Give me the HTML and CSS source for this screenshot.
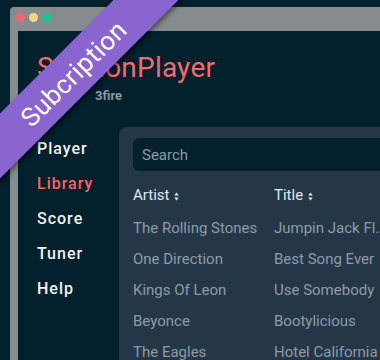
FILE: index.html
```html
<!DOCTYPE html>
<html lang="en">
<head>
  <meta charset="UTF-8">
  <meta name="viewport" content="width=device-width, initial-scale=1">
  <title>SessionPlayer</title>
  <link rel="stylesheet" href="styles.css">
</head>
<body>
  <div class="ribbon">Subcription</div>
  <div class="window">
    <div class="titlebar">
      <span class="dot red"></span>
      <span class="dot yellow"></span>
      <span class="dot green"></span>
    </div>
    <div class="app">
      <header class="brand">
        <h1>SessionPlayer</h1>
        <p class="by">3fire</p>
      </header>
      <div class="main">
        <nav class="nav">
          <a href="#">Player</a>
          <a href="#" class="active">Library</a>
          <a href="#">Score</a>
          <a href="#">Tuner</a>
          <a href="#">Help</a>
        </nav>
        <section class="panel">
          <input class="search" type="text" placeholder="Search">
          <table class="songs">
            <thead>
              <tr>
                <th class="col-artist">Artist <svg class="sort" width="5" height="9" viewBox="0 0 5 9"><path d="M2.5 0.5 L4.8 3.4 H0.2 Z M2.5 8.5 L4.8 5.6 H0.2 Z" fill="currentColor"/></svg></th>
                <th class="col-title">Title <svg class="sort" width="5" height="9" viewBox="0 0 5 9"><path d="M2.5 0.5 L4.8 3.4 H0.2 Z M2.5 8.5 L4.8 5.6 H0.2 Z" fill="currentColor"/></svg></th>
              </tr>
            </thead>
            <tbody>
              <tr><td>The Rolling Stones</td><td><span class="cut">Jumpin Jack Flash</span></td></tr>
              <tr><td>One Direction</td><td>Best Song Ever</td></tr>
              <tr><td>Kings Of Leon</td><td>Use Somebody</td></tr>
              <tr><td>Beyonce</td><td>Bootylicious</td></tr>
              <tr><td>The Eagles</td><td>Hotel California</td></tr>
            </tbody>
          </table>
        </section>
      </div>
    </div>
  </div>
</body>
</html>
```

FILE: styles.css
```css
* { margin: 0; padding: 0; box-sizing: border-box; }
body {
  font-family: Roboto, 'Noto Sans', sans-serif;
  background: #03202d;
  color: #fff;
  width: 380px;
  height: 360px;
  overflow: hidden;
  position: relative;
}
.window {
  margin: 7px 0 0 10px;
  width: 420px;
  background: #868c8e;
  border-radius: 4px 0 0 0;
  padding-left: 8px;
}
.titlebar {
  height: 24px;
  margin-left: -8px;
  padding: 6px 0 0 6px;
  display: flex;
  gap: 4px;
}
.dot {
  width: 9px;
  height: 9px;
  border-radius: 50%;
}
.red { background: #f2666a; }
.yellow { background: #f7d68b; }
.green { background: #19c596; }
.app {
  background: #03202d;
  height: 330px;
}
.brand {
  padding: 20px 0 0 19px;
  height: 96px;
}
h1 {
  font-weight: 400;
  font-size: 28px;
  line-height: 34px;
  color: #f56a6a;
  letter-spacing: 0.2px;
}
.by {
  font-size: 13px;
  font-weight: 700;
  color: #8a989f;
  margin: 3px 0 0 58px;
}
.main {
  display: flex;
}
.nav {
  flex: none;
  width: 101px;
  padding: 12px 0 0 19px;
  display: flex;
  flex-direction: column;
  gap: 16px;
}
.nav a {
  color: #f2f2f2;
  text-decoration: none;
  font-size: 16px;
  font-weight: 500;
  letter-spacing: 1px;
  line-height: 19px;
}
.nav a.active { color: #f56565; }
.panel {
  flex: 1;
  background: #253747;
  border-radius: 8px 0 0 0;
  padding: 11px 0 0 14px;
  height: 240px;
}
.search {
  display: block;
  width: 300px;
  height: 33px;
  border: none;
  border-radius: 6px;
  background: #03202d;
  color: #dfe5ea;
  font-family: inherit;
  font-size: 15px;
  padding-left: 9px;
}
.search::placeholder { color: #8b9aa5; }
.songs {
  border-collapse: collapse;
  margin-top: 9px;
  font-size: 15px;
  table-layout: fixed;
}
.songs th {
  text-align: left;
  font-weight: 400;
  color: #e1e7ec;
  height: 30px;
  white-space: nowrap;
}
.col-artist { width: 141px; }
.col-title { width: 120px; }
.sort { margin-left: 1px; vertical-align: -1px; }
.songs td {
  color: #8c9ba7;
  height: 31px;
  white-space: nowrap;
  padding-top: 4px;
}
.cut {
  display: block;
  width: 114px;
  overflow: hidden;
  text-overflow: ellipsis;
}
.ribbon {
  position: absolute;
  left: -97px;
  top: 50px;
  width: 340px;
  height: 46px;
  padding-top: 3px;
  line-height: 43px;
  background: #8a64cf;
  color: #fff;
  text-align: center;
  font-size: 26px;
  letter-spacing: 0.5px;
  transform: rotate(-45deg);
  box-shadow: 0 3px 5px rgba(0, 0, 0, 0.45);
  z-index: 2;
}
```
